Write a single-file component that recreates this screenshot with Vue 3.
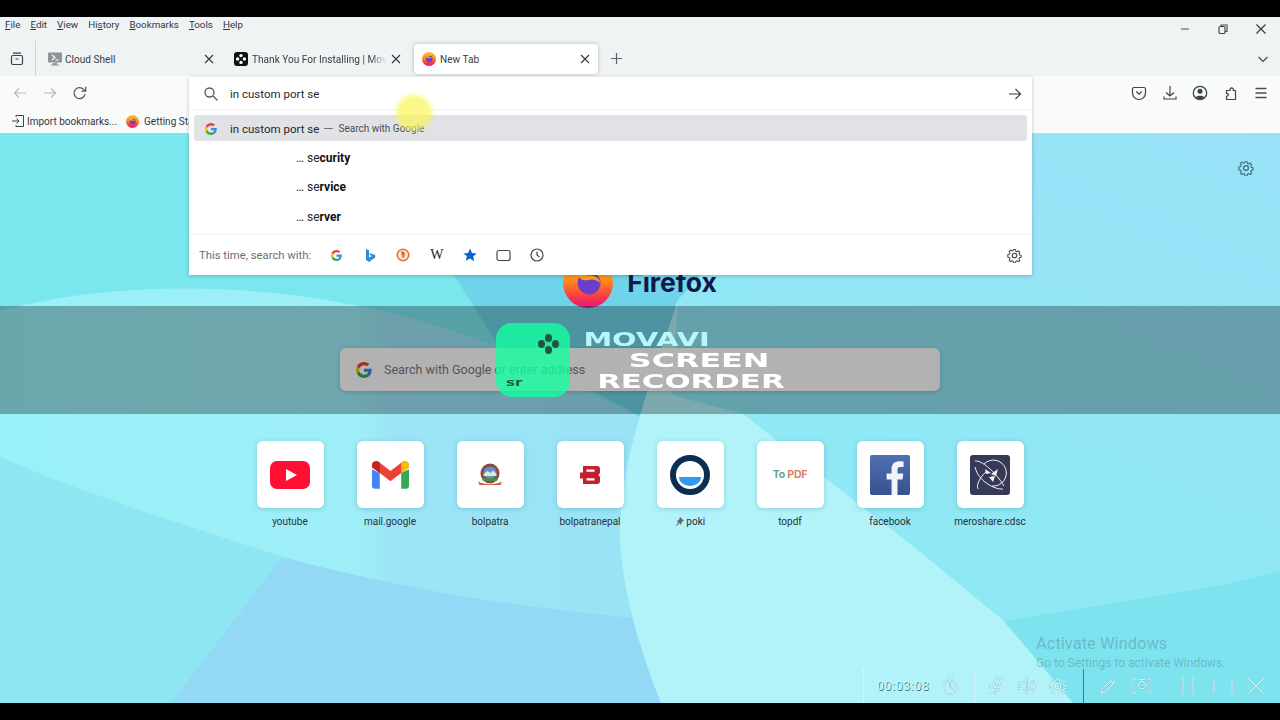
<script setup>
const menus = [
  { pre: '', key: 'F', post: 'ile' },
  { pre: '', key: 'E', post: 'dit' },
  { pre: '', key: 'V', post: 'iew' },
  { pre: 'Hi', key: 's', post: 'tory' },
  { pre: '', key: 'B', post: 'ookmarks' },
  { pre: '', key: 'T', post: 'ools' },
  { pre: '', key: 'H', post: 'elp' }
]

const suggestions = [
  { plain: 'se', bold: 'curity' },
  { plain: 'se', bold: 'rvice' },
  { plain: 'se', bold: 'rver' }
]

const tiles = [
  { id: 'youtube', label: 'youtube' },
  { id: 'gmail', label: 'mail.google' },
  { id: 'bolpatra', label: 'bolpatra' },
  { id: 'bolpatranepal', label: 'bolpatranepal' },
  { id: 'poki', label: 'poki', pinned: true },
  { id: 'topdf', label: 'topdf' },
  { id: 'facebook', label: 'facebook' },
  { id: 'meroshare', label: 'meroshare.cdsc' }
]
</script>

<template>
  <div class="screen">
    <svg class="defs" width="0" height="0">
      <defs>
        <linearGradient id="fx-ring" x1="0.5" y1="0" x2="0.5" y2="1">
          <stop offset="0" stop-color="#ffc62e" />
          <stop offset="0.45" stop-color="#ff8a1c" />
          <stop offset="0.8" stop-color="#f7354a" />
          <stop offset="1" stop-color="#e31587" />
        </linearGradient>
      </defs>
      <symbol id="g-logo" viewBox="0 0 48 48">
        <path fill="#EA4335" d="M24 9.5c3.54 0 6.71 1.22 9.21 3.6l6.85-6.85C35.9 2.38 30.47 0 24 0 14.62 0 6.51 5.38 2.56 13.22l7.98 6.19C12.43 13.72 17.74 9.5 24 9.5z" />
        <path fill="#4285F4" d="M46.98 24.55c0-1.57-.15-3.09-.38-4.55H24v9.02h12.94c-.58 2.96-2.26 5.48-4.78 7.18l7.73 6c4.51-4.18 7.09-10.36 7.09-17.65z" />
        <path fill="#FBBC05" d="M10.53 28.59c-.48-1.45-.76-2.99-.76-4.59s.27-3.14.76-4.59l-7.98-6.19C.92 16.46 0 20.12 0 24c0 3.88.92 7.54 2.56 10.78l7.97-6.19z" />
        <path fill="#34A853" d="M24 48c6.48 0 11.93-2.13 15.89-5.81l-7.73-6c-2.15 1.45-4.92 2.3-8.16 2.3-6.26 0-11.57-4.22-13.47-9.91l-7.98 6.19C6.51 42.62 14.62 48 24 48z" />
      </symbol>
      <symbol id="fx-logo" viewBox="0 0 48 48">
        <circle cx="24" cy="24" r="24" fill="url(#fx-ring)" />
        <circle cx="25" cy="24" r="11" fill="#6a3fc8" />
        <path fill="#ff9e1f" d="M14 15c4-4 11-5 16-3-4 0-7 2-7 5 5-1 12 1 13 7-3-3-8-4-11-3-4 1-8 0-10-3-1-1-1-2-1-3z" />
      </symbol>
      <symbol id="gear" viewBox="0 0 16 16">
        <path fill="none" stroke="currentColor" stroke-width="1.2" stroke-linejoin="round" d="M6.800 1h2.400l.4 2 1.300.6 1.800-1.100 1.700 1.700-1.100 1.800.6 1.300 2 .4v2.400l-2 .4-.6 1.300 1.100 1.800-1.700 1.700-1.800-1.100-1.300.6-.4 2H6.800l-.4-2-1.300-.6-1.800 1.100-1.700-1.700 1.100-1.800-.6-1.300-2-.4V6.700l2-.4.6-1.300-1.100-1.800 1.700-1.700 1.800 1.100 1.300-.6z" transform="translate(.8 .8) scale(.9)" />
        <circle cx="8" cy="8" r="2.400" fill="none" stroke="currentColor" stroke-width="1.200" />
      </symbol>
      <symbol id="tab-x" viewBox="0 0 10 10">
        <path d="M1 1l8 8M9 1L1 9" stroke="#33373b" stroke-width="1.100" fill="none" />
      </symbol>
    </svg>

    <div class="letterbox"></div>

    <header class="chrome">
      <div class="menubar">
        <nav class="menus">
          <span v-for="m in menus" :key="m.post" class="menu-item">{{ m.pre }}<u>{{ m.key }}</u>{{ m.post }}</span>
        </nav>
        <div class="window-btns">
          <svg width="12" height="12" viewBox="0 0 12 12"><path d="M2 6h8" stroke="#555" stroke-width="1" /></svg>
          <svg width="12" height="12" viewBox="0 0 12 12" fill="none" stroke="#444" stroke-width="1.100"><rect x="2" y="3.500" width="6" height="7" rx="1" /><path d="M4 3.500V2h6v6.500H8" /></svg>
          <svg width="12" height="12" viewBox="0 0 12 12"><path d="M1.500 1.500l9 9M10.500 1.500l-9 9" stroke="#333" stroke-width="1.100" /></svg>
        </div>
      </div>

      <div class="tabbar">
        <div class="tabs-view">
          <svg width="16" height="16" viewBox="0 0 16 16" fill="none" stroke="#3c4148" stroke-width="1.200"><rect x="2.500" y="4.500" width="11" height="9" rx="1.500" /><path d="M4 2.200h8M6.500 8h3" /></svg>
        </div>
        <div class="tab tab-cloud">
          <svg class="tab-icon" width="16" height="16" viewBox="0 0 16 16"><rect x="1" y="1.500" width="14" height="10" rx="1" fill="#8e9498" /><path d="M5 4l3 2.500L5 9M8.500 9h3" stroke="#fff" stroke-width="1.100" fill="none" /><path d="M6 12h4v1.500h2v1H4v-1h2z" fill="#8e9498" /></svg>
          <span class="tab-title">Cloud Shell</span>
          <svg class="tab-close" width="10" height="10"><use href="#tab-x" /></svg>
        </div>
        <div class="tab tab-movavi">
          <svg class="tab-icon" width="14" height="14" viewBox="0 0 14 14"><rect width="14" height="14" rx="3" fill="#111" /><g fill="#fff"><circle cx="7" cy="3.600" r="1.700" /><circle cx="7" cy="10.400" r="1.700" /><circle cx="3.600" cy="7" r="1.700" /><circle cx="10.400" cy="7" r="1.700" /></g></svg>
          <span class="tab-title fade">Thank You For Installing | Movavi</span>
          <svg class="tab-close" width="10" height="10"><use href="#tab-x" /></svg>
        </div>
        <div class="tab tab-active">
          <svg class="tab-icon" width="14" height="14"><use href="#fx-logo" /></svg>
          <span class="tab-title">New Tab</span>
          <svg class="tab-close" width="10" height="10"><use href="#tab-x" /></svg>
        </div>
        <svg class="new-tab" width="13" height="13" viewBox="0 0 13 13"><path d="M6.500 1v11M1 6.500h11" stroke="#5c6168" stroke-width="1.200" /></svg>
        <svg class="tab-list" width="12" height="12" viewBox="0 0 12 12" fill="none"><path d="M1.500 4l4.500 4.500L10.500 4" stroke="#444" stroke-width="1.100" /></svg>
      </div>

      <div class="navbar">
        <svg width="16" height="16" viewBox="0 0 16 16" fill="none" stroke="#b4b9bd" stroke-width="1.200"><path d="M14 8H2.500M7 3.500L2.500 8 7 12.500" /></svg>
        <svg width="16" height="16" viewBox="0 0 16 16" fill="none" stroke="#b4b9bd" stroke-width="1.200"><path d="M2 8h11.500M9 3.500L13.500 8 9 12.500" /></svg>
        <svg width="16" height="16" viewBox="0 0 16 16" fill="none" stroke="#55595e" stroke-width="1.300"><path d="M13 9a5.500 5.500 0 1 1-1.400-4.600L13.500 6" /><path d="M13.700 1.800v4.400H9.300" /></svg>
        <div class="nav-spacer"></div>
        <div class="nav-right">
          <svg width="16" height="16" viewBox="0 0 16 16" fill="none" stroke="#3f4448" stroke-width="1.200"><path d="M3 2.500h10a1.500 1.500 0 0 1 1.500 1.500v4a6.500 6.500 0 0 1-13 0V4A1.500 1.500 0 0 1 3 2.500z" /><path d="M5.300 6.500L8 9.200l2.700-2.700" /></svg>
          <svg width="16" height="16" viewBox="0 0 16 16" fill="none" stroke="#3f4448" stroke-width="1.200"><path d="M8 1v10M4 7.500L8 11l4-3.500M2 11.500v2.500h12v-2.500" /></svg>
          <svg width="16" height="16" viewBox="0 0 16 16"><circle cx="8" cy="8" r="6.700" fill="none" stroke="#3f4448" stroke-width="1.300" /><circle cx="8" cy="6.300" r="2.500" fill="#3f4448" /><path d="M3.500 12.500c1-2.200 8-2.200 9 0C11 14.500 5 14.500 3.500 12.500z" fill="#3f4448" /></svg>
          <svg width="16" height="16" viewBox="0 0 16 16" fill="none" stroke="#3f4448" stroke-width="1.200" stroke-linejoin="round"><path d="M3.500 14.500h9v-9h-2.200c.7-3.500-4-3.500-3.300 0H3.500v3c2.500-.5 2.500 3 0 2.500z" /></svg>
          <svg width="16" height="16" viewBox="0 0 16 16"><path d="M2.500 3.500h11M2.500 8h11M2.500 12.500h11" stroke="#4a4e53" stroke-width="1.300" /></svg>
        </div>
      </div>

      <div class="bookmarks">
        <span class="bookmark">
          <svg width="14" height="14" viewBox="0 0 14 14" fill="none" stroke="#3f4448" stroke-width="1"><path d="M5 3V1.500h7.500v11H5V11M1 7h7M5.500 4.500L8 7l-2.500 2.500" /></svg>
          Import bookmarks...
        </span>
        <span class="bookmark bookmark-fx">
          <svg width="13" height="13"><use href="#fx-logo" /></svg>
          Getting Started
        </span>
      </div>
    </header>

    <main class="newtab">
      <svg class="wallpaper" viewBox="0 0 1280 570" preserveAspectRatio="none">
        <defs>
          <linearGradient id="base" x1="0" y1="1" x2="1" y2="0">
            <stop offset="0" stop-color="#86eff2" />
            <stop offset="1" stop-color="#98e2f7" />
          </linearGradient>
          <linearGradient id="sweep" x1="0" y1="0" x2="1" y2="0">
            <stop offset="0" stop-color="#99f0f8" />
            <stop offset="0.55" stop-color="#9eeef7" />
            <stop offset="0.6" stop-color="#9ce5f6" />
            <stop offset="1" stop-color="#9ae3f6" />
          </linearGradient>
        </defs>
        <rect width="1280" height="570" fill="url(#base)" />
        <path d="M0 0H720L678 167L640 300H0z" fill="#7ae7ee" />
        <path d="M440 120C500 100 640 100 720 120L678 167L650 290C620 270 560 240 500 215z" fill="#6fd3e9" />
        <path d="M0 178C100 150 300 135 500 215L650 290L633 485C480 470 380 450 282 424C180 390 80 360 0 324z" fill="url(#sweep)" />
        <path d="M0 324C80 360 180 390 282 424L171 570H0z" fill="#8de6f2" />
        <path d="M282 424C380 450 480 470 633 485L661 570H171z" fill="#93d9f5" />
        <path d="M678 167C650 250 620 330 620 398C620 440 633 500 661 570H1073L1004 488L914 414L743 281L672 262z" fill="#b2f3f9" />
        <path d="M1004 488C1100 470 1200 460 1280 438V570H1073z" fill="#7de3ef" />
      </svg>

      <svg class="page-gear" width="16" height="16"><use href="#gear" /></svg>

      <div class="brand">
        <svg width="50" height="50"><use href="#fx-logo" /></svg>
        <span class="wordmark">Firefox</span>
      </div>

      <div class="search">
        <svg width="16" height="16"><use href="#g-logo" /></svg>
        <span>Search with Google or enter address</span>
      </div>

      <div class="tiles">
        <div v-for="t in tiles" :key="t.id" class="tile">
          <div class="tile-card">
            <svg v-if="t.id === 'youtube'" width="40" height="28" viewBox="0 0 40 28"><rect width="40" height="28" rx="7" fill="#ff0f33" /><path d="M16 8l11 6-11 6z" fill="#fff" /></svg>
            <svg v-else-if="t.id === 'gmail'" width="37" height="28" viewBox="0 0 38 28"><path d="M0 8v17a3 3 0 0 0 3 3h5V12z" fill="#4285f4" /><path d="M30 12v16h5a3 3 0 0 0 3-3V8z" fill="#34a853" /><path d="M8 12L0 6V4c0-4 5-5.500 8-2.500L19 10l11-8.500c3-3 8-1.500 8 2.500v2l-8 6-11 8.500z" fill="#ea4335" /><path d="M30 1.500c3-3 8-1.500 8 2.500v2l-8 6z" fill="#fbbc04" /><path d="M0 4c0-4 5-5.500 8-2.500V12L0 6z" fill="#c5221f" /></svg>
            <svg v-else-if="t.id === 'bolpatra'" width="26" height="24" viewBox="0 0 26 24"><ellipse cx="13" cy="10.500" rx="9.500" ry="10" fill="#8c4a3c" /><ellipse cx="13" cy="9.500" rx="6.500" ry="6" fill="#5f94c4" /><path d="M6.500 11l4-3 3 2 2.500-2.500 3.500 3.500v2H6.500z" fill="#e6e2d8" /><path d="M5 15h16l-1 3H6z" fill="#4e8a4a" /><path d="M1 18.500c6 3.500 18 3.500 24 0l-1.500 3.500h-21z" fill="#d0553e" /></svg>
            <svg v-else-if="t.id === 'bolpatranepal'" width="20" height="18" viewBox="0 0 20 18"><path d="M3 0h14a3 3 0 0 1 3 3v4l-1.500 2 1.500 2v4a3 3 0 0 1-3 3H3v-5.500H0V6.500h3z" fill="#c41f2e" /><path d="M6.500 3.500h8v2.200h-8zM6.500 12.300h8v2.200h-8z" fill="#fff" /></svg>
            <svg v-else-if="t.id === 'poki'" width="40" height="40" viewBox="0 0 40 40"><circle cx="20" cy="20" r="17" fill="#fff" stroke="#0b2f50" stroke-width="6" /><path d="M9 22h22a11 9 0 0 1-22 0z" fill="#2e9bf0" /></svg>
            <span v-else-if="t.id === 'topdf'" class="topdf"><span class="to">To</span> <span class="pdf">PDF</span></span>
            <svg v-else-if="t.id === 'facebook'" width="40" height="40" viewBox="0 0 40 40"><defs><linearGradient id="fb" x1="0" y1="0" x2="0" y2="1"><stop offset="0" stop-color="#4f70b4" /><stop offset="1" stop-color="#36528f" /></linearGradient></defs><rect width="40" height="40" rx="2" fill="url(#fb)" /><path d="M27.500 40V24.500h5l.8-6h-5.800v-3.700c0-1.800.5-2.900 3-2.900h3.100V6.500c-.6-.1-2.400-.2-4.500-.2-4.500 0-7.500 2.700-7.500 7.700v4.500h-5v6h5V40z" fill="#f2f4f8" /></svg>
            <svg v-else width="40" height="40" viewBox="0 0 40 40"><rect width="40" height="40" rx="3" fill="#363a58" /><g fill="none" stroke="#f4f4f4" stroke-width="1"><path d="M14 9a13 13 0 1 1 8 22" /><path d="M5 6c6-1 20 10 29 25M33 34C25 35 8 26 5 12M8 34C6 30 10 22 16 17" /></g><path d="M15 14l6 4-5 1zM28 14l-7 5 5 2zM19 22l6-1-2 6z" fill="#f4f4f4" /></svg>
          </div>
          <span class="tile-label">
            <svg v-if="t.pinned" class="pin" width="9" height="9" viewBox="0 0 9 9"><path d="M5 0l4 4-2 .5L6 8 4.500 6 1.500 9 1 8.500l2.500-3.200L1.500 4 4 3z" fill="#5e6670" /></svg>
            {{ t.label }}
          </span>
        </div>
      </div>

      <div class="movavi-band">
        <div class="movavi-logo">
          <span class="dots"><i></i><i></i><i></i><i></i></span>
          <span class="sr">sr</span>
        </div>
        <div class="movavi-text">
          <div class="mv-line mv-top"><span>MOVAVI</span></div>
          <div class="mv-line mv-mid"><span>SCREEN</span></div>
          <div class="mv-line mv-bot"><span>RECORDER</span></div>
        </div>
      </div>

      <div class="activate">
        <div class="activate-title">Activate Windows</div>
        <div class="activate-sub">Go to Settings to activate Windows.</div>
      </div>

      <div class="rec-bar">
        <div class="rec-group rec-time">
          <span class="rec-clock">00:03:08</span>
          <svg width="18" height="20" viewBox="0 0 18 20"><circle cx="9" cy="11.500" r="6.800" /><path d="M9 7.500v4l2.500 1.500M6.500 1.500h5M3 3.500l-1.500 1.500" /></svg>
        </div>
        <div class="rec-group rec-audio">
          <svg width="18" height="20" viewBox="0 0 18 20"><rect x="7" y="2" width="6" height="10" rx="3" transform="rotate(15 10 7)" /><path d="M3 9c0 7 8 8 11 3M2 18L16 2M8 15v3" /></svg>
          <svg width="20" height="20" viewBox="0 0 20 20"><path d="M2 7.500h3L10 3v14l-5-4.500H2zM13 6c2 2 2 6 0 8M15.500 4c3 3 3 9 0 12" /></svg>
          <svg width="18" height="18"><use href="#gear" /></svg>
        </div>
        <div class="rec-group rec-tools">
          <svg class="rec-pen" width="18" height="18" viewBox="0 0 18 18"><path d="M2 16l1-4L13 2l3 3L6 15zM11.500 3.500l3 3" /></svg>
          <svg class="rec-cam" width="22" height="18" viewBox="0 0 22 18"><path d="M5 2H2v14h3M17 2h3v14h-3" /><circle cx="11" cy="8" r="3.500" /><path d="M8 2.500h6" /></svg>
          <svg class="rec-pause" width="14" height="20" viewBox="0 0 14 20"><path d="M2 1v18M12 1v18" stroke-width="1.500" /></svg>
          <svg class="rec-stop" width="22" height="20" viewBox="0 0 22 20"><path d="M2 3v14M20 3v14" stroke-width="1.500" /></svg>
          <svg class="rec-close" width="18" height="18" viewBox="0 0 18 18"><path d="M1 1l16 16M17 1L1 17" /></svg>
        </div>
      </div>
    </main>

    <div class="letterbox"></div>

    <!-- address bar results panel, open over the page -->
    <div class="urlbar">
      <div class="url-input">
        <svg width="14" height="14" viewBox="0 0 14 14" fill="none" stroke="#55595e" stroke-width="1.300"><circle cx="5.500" cy="5.500" r="4.500" /><path d="M9 9l4.500 4.500" /></svg>
        <span class="url-text">in custom port se</span>
        <svg class="go" width="14" height="14" viewBox="0 0 14 14" fill="none" stroke="#33373b" stroke-width="1.200"><path d="M1 7h11.500M7.500 2l5 5-5 5" /></svg>
      </div>
      <div class="result result-active">
        <svg width="12" height="12"><use href="#g-logo" /></svg>
        <span class="url-text">in custom port se</span>
        <span class="result-dash">—</span>
        <span class="result-sub">Search with Google</span>
      </div>
      <div class="result-rows">
        <div v-for="s in suggestions" :key="s.bold" class="result-row">… {{ s.plain }}<b>{{ s.bold }}</b></div>
      </div>
      <div class="oneoff">
        <span class="oneoff-label">This time, search with:</span>
        <div class="oneoff-icons">
          <span class="oneoff-icon"><svg width="11" height="11"><use href="#g-logo" /></svg></span>
          <span class="oneoff-icon"><svg width="11" height="13" viewBox="0 0 11 13"><path d="M1 0l3 1v7.500l3-1.500-2-.8-.8-2.200 6 2v2.500L4 13 1 11z" fill="#2a8fd8" /></svg></span>
          <span class="oneoff-icon"><svg width="14" height="14" viewBox="0 0 14 14"><circle cx="7" cy="7" r="6.500" fill="#e0703c" /><circle cx="7" cy="7" r="5" fill="#fbe6d4" /><path d="M5 3.500c2-.8 4 0 4 3 0 2-1 3-2 4-1-2-2-5-2-7z" fill="#e0703c" /><path d="M7 7h2.500L8 8z" fill="#e8b020" /></svg></span>
          <span class="oneoff-icon wiki">W</span>
          <span class="oneoff-icon"><svg width="14" height="14" viewBox="0 0 14 14"><path d="M7 .5l2 4.400 4.700.5-3.500 3.200 1 4.700L7 10.500l-4.200 2.300 1-4.700L.3 5.400 5 4.900z" fill="#0a63d2" /></svg></span>
          <span class="oneoff-icon"><svg width="15" height="13" viewBox="0 0 15 13"><rect x="1" y="1.500" width="13" height="10" rx="2" fill="none" stroke="#43474c" stroke-width="1.200" /></svg></span>
          <span class="oneoff-icon"><svg width="14" height="14" viewBox="0 0 14 14" fill="none" stroke="#43474c" stroke-width="1.200"><circle cx="7" cy="7" r="6" /><path d="M7 3.500V7l2.500 2" /></svg></span>
        </div>
        <svg class="oneoff-gear" width="15" height="15"><use href="#gear" /></svg>
      </div>
    </div>

    <!-- recorder's cursor highlight -->
    <div class="cursor-glow"></div>
  </div>
</template>

<style>
html, body {
  margin: 0;
  background: #000;
}
</style>

<style scoped>
.screen {
  position: relative;
  width: 1280px;
  height: 720px;
  display: flex;
  flex-direction: column;
  overflow: hidden;
  font-family: "Roboto", "Liberation Sans", sans-serif;
  color: #24282c;
}

.defs {
  position: absolute;
}

.letterbox {
  height: 17px;
  background: #000;
  flex-shrink: 0;
}

.chrome {
  flex-shrink: 0;
  background: #f0f3f4;
}

/* menu row */
.menubar {
  height: 24px;
  display: flex;
  align-items: center;
  justify-content: space-between;
  padding-right: 13px;
}

.menus {
  display: flex;
  gap: 10px;
  padding-left: 5px;
  font-size: 9.800px;
  margin-top: -10px;
  color: #33373b;
}

.window-btns {
  display: flex;
  gap: 26px;
}

/* tab strip */
.tabbar {
  height: 35px;
  display: flex;
  align-items: center;
  position: relative;
  font-size: 10.100px;
}

.tabs-view {
  width: 36px;
  height: 35px;
  box-sizing: border-box;
  display: flex;
  align-items: center;
  justify-content: center;
  padding-right: 2px;
  border-right: 1px solid #cfd3d6;
  margin-right: 4px;
}

.tab {
  height: 30px;
  display: flex;
  align-items: center;
  box-sizing: border-box;
  gap: 4px;
  padding: 0 4px 0 7px;
}

.tab-cloud {
  width: 178px;
  margin-right: 8px;
  gap: 2px;
}

.tab-movavi {
  width: 179px;
  margin-right: 9px;
  padding-left: 8px;
}

.tab-active {
  width: 184px;
  padding: 0 8px 0 8px;
  background: #fff;
  border-radius: 4px;
  box-shadow: 0 0 4px rgba(0, 0, 0, .25);
}

.tab-icon {
  flex-shrink: 0;
}

.tab-title {
  flex: 1;
  min-width: 0;
  padding-top: 1px;
  white-space: nowrap;
  overflow: hidden;
  color: #3a3e42;
}

.tab-title.fade {
  -webkit-mask-image: linear-gradient(to right, #000 88%, transparent);
  mask-image: linear-gradient(to right, #000 88%, transparent);
}

.tab-close {
  flex-shrink: 0;
}

.new-tab {
  margin-left: 12px;
}

.tab-list {
  margin-left: auto;
  margin-right: 11px;
}

/* toolbar */
.navbar {
  height: 32px;
  box-sizing: border-box;
  padding: 2px 11px 0 12px;
  display: flex;
  align-items: center;
  gap: 14px;
  background: #f9fbfb;
}

.nav-spacer {
  flex: 1;
}

.nav-right {
  display: flex;
  gap: 14.500px;
}

.bookmarks {
  height: 25px;
  box-sizing: border-box;
  padding: 1px 0 0 11px;
  display: flex;
  align-items: center;
  gap: 9px;
  background: #f9fbfb;
  font-size: 10px;
  color: #33373b;
}

.bookmark {
  display: flex;
  align-items: center;
  gap: 2px;
  white-space: nowrap;
}

.bookmark-fx {
  gap: 5px;
}

/* new tab page */
.newtab {
  flex: 1;
  position: relative;
  overflow: hidden;
  box-sizing: border-box;
  padding-top: 125px;
  display: flex;
  flex-direction: column;
  align-items: center;
}

.wallpaper {
  position: absolute;
  inset: 0;
  width: 100%;
  height: 100%;
}

.page-gear {
  position: absolute;
  top: 27px;
  right: 26px;
  color: #3d6c80;
}

.brand {
  position: relative;
  height: 50px;
  display: flex;
  align-items: center;
  gap: 14px;
}

.wordmark {
  font-family: "Inter", "Liberation Sans", sans-serif;
  font-size: 26.500px;
  font-weight: 700;
  color: #0f1a4a;
  margin-top: -2px;
}

.search {
  position: relative;
  width: 600px;
  height: 43px;
  margin-top: 40px;
  padding-left: 16px;
  box-sizing: border-box;
  display: flex;
  align-items: center;
  gap: 12px;
  background: #fff;
  border-radius: 6px;
  box-shadow: 0 1px 4px rgba(0, 0, 0, .18);
  font-size: 12.5px;
  color: #757b80;
}

.tiles {
  position: relative;
  margin-top: 50px;
  display: flex;
}

.tile {
  width: 100px;
  display: flex;
  flex-direction: column;
  align-items: center;
  gap: 7px;
}

.tile-card {
  width: 67px;
  height: 67px;
  display: flex;
  align-items: center;
  justify-content: center;
  background: #fff;
  border-radius: 6px;
  box-shadow: 0 1px 5px rgba(40, 100, 130, .25);
}

.tile-label {
  font-size: 10px;
  line-height: 14px;
  color: #2b3036;
  white-space: nowrap;
}

.pin {
  vertical-align: -1px;
}

.topdf {
  font-family: "Inter", "Liberation Sans", sans-serif;
  font-size: 10.5px;
  font-weight: 700;
  letter-spacing: -.2px;
}

.topdf .to {
  color: #5f9e9c;
}

.topdf .pdf {
  color: #d4805f;
}

/* recorder watermark */
.movavi-band {
  position: absolute;
  left: 0;
  right: 0;
  top: 173px;
  height: 108px;
  background: rgba(0, 0, 0, .3);
}

.movavi-logo {
  position: absolute;
  left: 496px;
  top: 17px;
  width: 74px;
  height: 74px;
  border-radius: 16px;
  background: rgba(20, 255, 160, .8);
}

.dots {
  position: absolute;
  left: 42px;
  top: 11px;
  width: 20px;
  height: 20px;
}

.dots i {
  position: absolute;
  width: 7px;
  height: 8px;
  border-radius: 50%;
  background: #24543f;
}

.dots i:nth-child(1) { left: 7px; top: 0; }
.dots i:nth-child(2) { left: 0; top: 6px; }
.dots i:nth-child(3) { left: 14px; top: 6px; }
.dots i:nth-child(4) { left: 7px; top: 12px; }

.sr {
  position: absolute;
  left: 10px;
  top: 54px;
  font-family: "DejaVu Sans", sans-serif;
  font-size: 10px;
  font-weight: 700;
  line-height: 12px;
  color: #1c5a42;
  transform: scaleX(1.5);
  transform-origin: left center;
}

.movavi-text {
  position: absolute;
  left: 578px;
  top: 24px;
  width: 226px;
  font-family: "DejaVu Sans", sans-serif;
  font-weight: 700;
  font-size: 19px;
  color: #fff;
}

.mv-line {
  display: flex;
  justify-content: center;
  overflow: hidden;
  white-space: nowrap;
}

.mv-line span {
  display: block;
  transform: scaleX(1.62);
}

.mv-top {
  height: 17px;
  line-height: 19px;
  margin-left: -88px;
  color: #b8f6fa;
}

.mv-top span {
  transform: scaleX(1.52);
}

.mv-mid {
  height: 21px;
  line-height: 21px;
  margin-top: 3px;
  margin-left: 16px;
}

.mv-mid span {
  transform: scaleX(1.67);
}

.mv-bot {
  height: 21px;
  line-height: 21px;
}

/* windows watermark */
.activate {
  position: absolute;
  left: 1036px;
  top: 501px;
  color: rgba(70, 120, 135, .38);
  white-space: nowrap;
}

.activate-title {
  font-size: 16.500px;
  line-height: 20px;
}

.activate-sub {
  font-size: 12px;
  line-height: 20px;
  margin-top: -1px;
}

/* recorder controls, ghosted into the page */
.rec-bar {
  position: absolute;
  left: 863px;
  right: 2px;
  bottom: 0;
  height: 34px;
  display: flex;
  align-items: center;
}

.rec-bar svg {
  fill: none;
  stroke: #d4f7fa;
  stroke-width: 1.300;
  color: #d4f7fa;
  filter: drop-shadow(.7px .7px 0 rgba(40, 120, 140, 1));
  flex-shrink: 0;
}

.rec-group {
  height: 100%;
  display: flex;
  align-items: center;
  box-sizing: border-box;
}

.rec-time {
  width: 112px;
  padding-left: 13px;
  gap: 9px;
  border-left: 1px solid #d2f7fa;
  border-right: 1px solid #d2f7fa;
}

.rec-clock {
  width: 55px;
  font-size: 12px;
  color: #d8f9fb;
  text-shadow: .7px .7px 0 rgba(40, 120, 140, 1);
  letter-spacing: .8px;
  white-space: nowrap;
}

.rec-audio {
  width: 109px;
  padding-left: 12px;
  gap: 12px;
  border-right: 1px solid #2f7d8e;
}

.rec-tools {
  flex: 1;
  padding-left: 15px;
}

.rec-cam {
  margin-left: 14px;
}

.rec-pause {
  margin-left: 28px;
}

.rec-stop {
  margin-left: 17px;
}

.rec-close {
  margin-left: 13px;
}

/* awesomebar panel */
.urlbar {
  position: absolute;
  left: 189px;
  top: 77px;
  width: 843px;
  height: 198px;
  background: #fff;
  box-shadow: 0 1px 4px rgba(0, 0, 0, .22);
  display: flex;
  flex-direction: column;
  font-size: 11.500px;
}

.url-input {
  height: 33px;
  box-sizing: border-box;
  flex-shrink: 0;
  display: flex;
  align-items: center;
  padding: 1px 10px 0 15px;
  gap: 12px;
  border-bottom: 1px solid #f0f2f3;
  margin-bottom: 5px;
}

.go {
  margin-left: auto;
}

.url-text {
  color: #25292d;
}

.result {
  height: 26px;
  box-sizing: border-box;
  padding-top: 1px;
  flex-shrink: 0;
  margin: 0 5px;
  padding-left: 11px;
  display: flex;
  align-items: center;
}

.result svg {
  margin-right: 13px;
}

.result-active {
  background: #e0e2e5;
  border-radius: 3px;
}

.result-dash {
  margin: 0 5px 0 4px;
  font-size: 13px;
  color: #6c7075;
}

.result-sub {
  font-size: 10px;
  color: #4a4e53;
}

.result-rows {
  flex-shrink: 0;
  padding: 2px 0 2.500px;
  font-size: 12px;
}

.result-row {
  height: 29.500px;
  padding-left: 107px;
  display: flex;
  align-items: center;
  white-space: pre;
  color: #25292d;
}

.result-row b {
  font-weight: 700;
  color: #111;
}

.oneoff {
  flex: 1;
  display: flex;
  align-items: center;
  padding: 0 10px;
  border-top: 1px solid #f0f2f3;
}

.oneoff-label {
  width: 121px;
  font-size: 11.300px;
  color: #6c7075;
  white-space: nowrap;
}

.oneoff-icons {
  display: flex;
  align-items: center;
}

.oneoff-icon {
  width: 33.400px;
  display: flex;
  align-items: center;
  justify-content: center;
}

.wiki {
  font-family: "Liberation Serif", serif;
  font-size: 14px;
  color: #222;
  line-height: 14px;
}

.oneoff-gear {
  margin-left: auto;
  color: #43474c;
}

.cursor-glow {
  position: absolute;
  left: 396px;
  top: 95px;
  width: 36px;
  height: 36px;
  border-radius: 50%;
  background: rgba(250, 245, 90, .72);
  filter: blur(2px);
}
</style>
